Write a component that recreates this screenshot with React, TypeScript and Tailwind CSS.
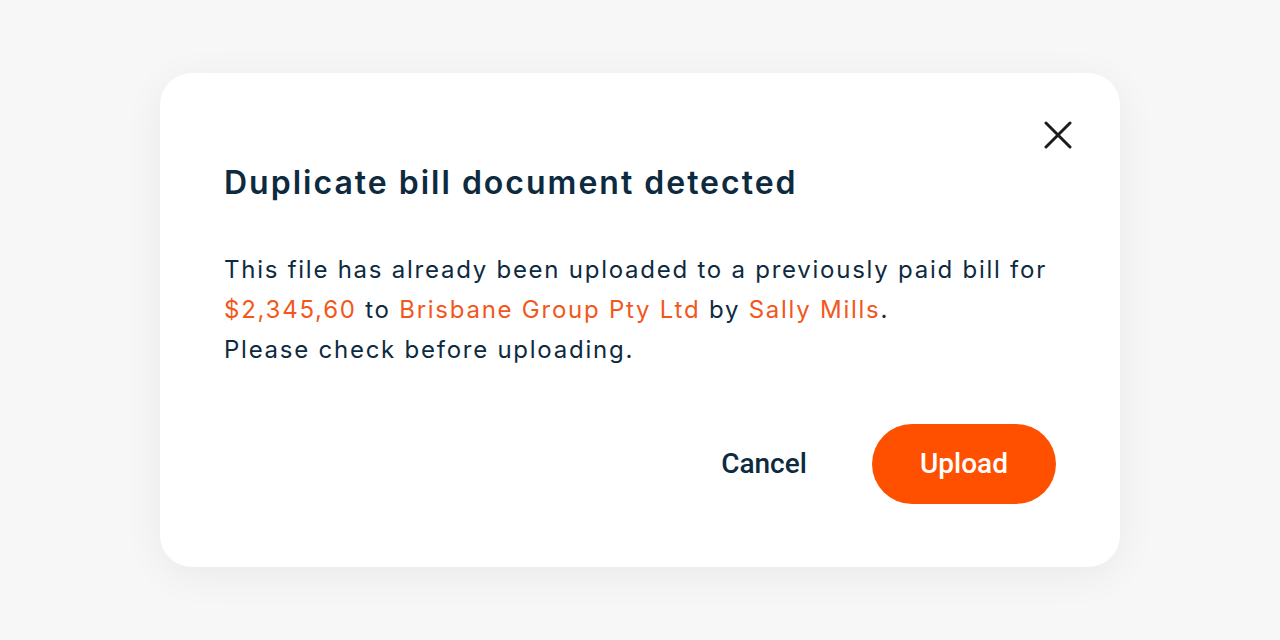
import { useState } from 'react';

const DuplicateBillDialog = () => {
  const [open, setOpen] = useState(true);

  return (
    <div className="min-h-[640px] w-full bg-[#f7f7f7] flex items-center justify-center font-['Inter',sans-serif]">
      {open && (
        <div className="relative w-[960px] bg-white rounded-[32px] shadow-[0_8px_40px_rgba(0,0,0,0.06)] px-16 pt-[90px] pb-[63px]">
          <button
            onClick={() => setOpen(false)}
            className="absolute top-12 right-12 w-7 h-7 flex items-center justify-center text-[#1c1c1c]"
            aria-label="Close"
          >
            <svg width="28" height="28" viewBox="0 0 28 28" fill="none">
              <path d="M2 2L26 26M26 2L2 26" stroke="currentColor" strokeWidth="3" strokeLinecap="round" />
            </svg>
          </button>

          <h2 className="text-[32px] leading-[40px] font-semibold tracking-[2px] text-[#0e2a3f]">
            Duplicate bill document detected
          </h2>

          <p className="mt-[47px] text-[24px] leading-[40px] tracking-[1.75px] text-[#0e2a3f]">
            This file has already been uploaded to a previously paid bill for
            <br />
            <span className="text-[#f2571c]">$2,345,60</span> to{' '}
            <span className="text-[#f2571c]">Brisbane Group Pty Ltd</span> by{' '}
            <span className="text-[#f2571c]">Sally Mills</span>.
            <br />
            Please check before uploading.
          </p>

          <div className="mt-[54px] flex justify-end gap-4">
            <button
              onClick={() => setOpen(false)}
              className="w-[184px] h-20 rounded-full font-['Roboto',sans-serif] font-medium text-[28px] text-[#0e2a3f]"
            >
              Cancel
            </button>
            <button className="w-[184px] h-20 rounded-full bg-[#ff5000] font-['Roboto',sans-serif] font-medium text-[28px] text-white">
              Upload
            </button>
          </div>
        </div>
      )}
    </div>
  );
};

export default function App() {
  return <DuplicateBillDialog />;
}
